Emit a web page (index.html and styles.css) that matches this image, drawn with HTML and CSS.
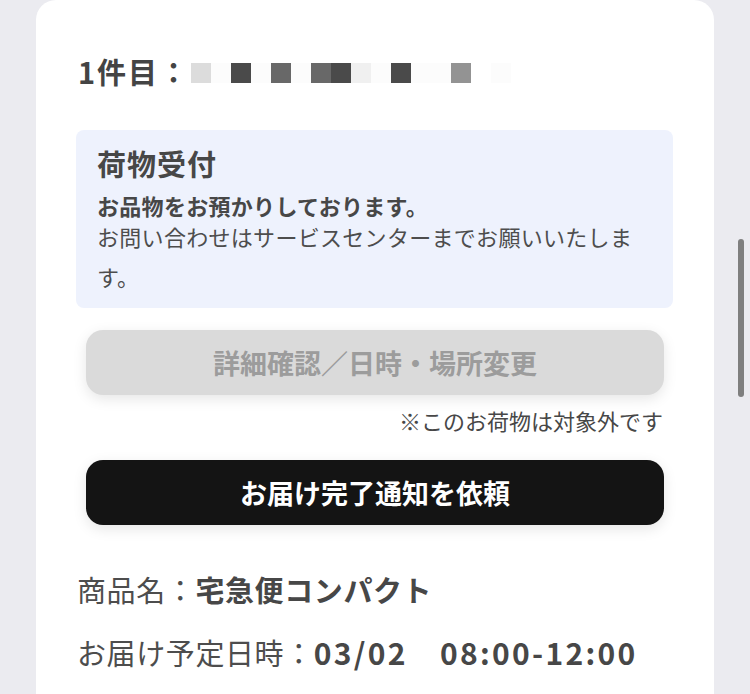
FILE: index.html
```html
<!DOCTYPE html>
<html lang="ja">
<head>
<meta charset="utf-8">
<title>お荷物</title>
<link rel="stylesheet" href="styles.css">
</head>
<body>
<div class="page">
  <div class="card">
    <div class="heading">
      <span class="heading-label">1件目：</span>
      <span class="mosaic">
        <i class="px p1"></i><i class="px p0"></i><i class="px p4"></i><i class="px p0"></i><i class="px p3"></i><i class="px p0"></i><i class="px p3"></i><i class="px p4"></i><i class="px p5"></i><i class="px p0"></i><i class="px p4"></i><i class="px p0"></i><i class="px p0"></i><i class="px p2"></i><i class="px p6"></i><i class="px p0"></i>
      </span>
    </div>

    <div class="status">
      <div class="status-title">荷物受付</div>
      <div class="status-lead">お品物をお預かりしております。</div>
      <div class="status-body">お問い合わせはサービスセンターまでお願いいたします。</div>
    </div>

    <div class="btn btn-disabled">詳細確認／日時・場所変更</div>
    <div class="note">※このお荷物は対象外です</div>
    <div class="btn btn-primary">お届け完了通知を依頼</div>

    <div class="info info-first">商品名：<b>宅急便コンパクト</b></div>
    <div class="info info-second">お届け予定日時：<b class="num">03/02　08:00-12:00</b></div>
  </div>
  <div class="scroll-thumb"></div>
</div>
</body>
</html>
```

FILE: styles.css
```css
* { box-sizing: border-box; }

html, body {
  margin: 0;
  padding: 0;
}

body {
  background: #ebebf0;
  font-family: "Noto Sans CJK JP", "Noto Sans", sans-serif;
  color: #474747;
  overflow: hidden;
}

.page {
  position: relative;
  width: 750px;
  height: 694px;
  overflow: hidden;
}

.card {
  margin-left: 36px;
  width: 678px;
  min-height: 720px;
  background: #ffffff;
  border-radius: 20px 20px 0 0;
  padding: 51px 41px 0 40px;
}

.heading {
  display: flex;
  align-items: center;
  height: 40px;
  padding-left: 2px;
}

.heading-label {
  font-size: 29px;
  font-weight: 700;
  line-height: 40px;
  letter-spacing: 2px;
  color: #444;
}

.mosaic {
  display: flex;
  margin-left: 1px;
  margin-top: 4px;
}

.px {
  display: block;
  width: 20px;
  height: 20px;
}
.p0 { background: #fcfcfc; }
.p1 { background: #dcdcdc; }
.p2 { background: #939393; }
.p3 { background: #686868; }
.p4 { background: #4a4a4a; }
.p5 { background: #f0f0f0; }
.p6 { background: #ffffff; }

.status {
  margin-top: 39px;
  background: #eef2fd;
  border-radius: 8px;
  padding: 13px 32px 12px 21px;
}

.status-title {
  font-size: 29px;
  font-weight: 700;
  line-height: 40px;
  letter-spacing: 1px;
  color: #474747;
}

.status-lead {
  margin-top: 10px;
  font-size: 22px;
  font-weight: 700;
  line-height: 24px;
  letter-spacing: 0.3px;
  color: #474747;
}

.status-body {
  margin-top: -1px;
  font-size: 22px;
  line-height: 40px;
  letter-spacing: 0.3px;
  color: #4d4d4d;
}

.btn {
  display: flex;
  align-items: center;
  justify-content: center;
  height: 65px;
  margin: 0 9px 0 10px;
  border-radius: 17px;
  font-size: 27px;
  font-weight: 700;
  box-shadow: 0 4px 14px rgba(0, 0, 0, 0.10);
}

.btn-disabled {
  margin-top: 22px;
  background: #dadada;
  color: #9c9c9c;
}

.note {
  margin-top: 10px;
  padding-right: 10px;
  text-align: right;
  font-size: 22px;
  line-height: 30px;
  color: #474747;
}

.btn-primary {
  margin-top: 25px;
  background: #141414;
  color: #ffffff;
}

.info {
  padding-left: 1px;
  font-size: 29px;
  line-height: 40px;
  letter-spacing: 0.6px;
  color: #4d4d4d;
}

.info b {
  font-weight: 700;
  color: #474747;
}

.info .num {
  font-size: 30px;
  letter-spacing: 2.3px;
}

.info-first {
  margin-top: 44px;
}

.info-second {
  margin-top: 23px;
}

.scroll-thumb {
  position: absolute;
  left: 738px;
  top: 239px;
  width: 6px;
  height: 158px;
  border-radius: 3px;
  background: #7f7f7f;
}
```
